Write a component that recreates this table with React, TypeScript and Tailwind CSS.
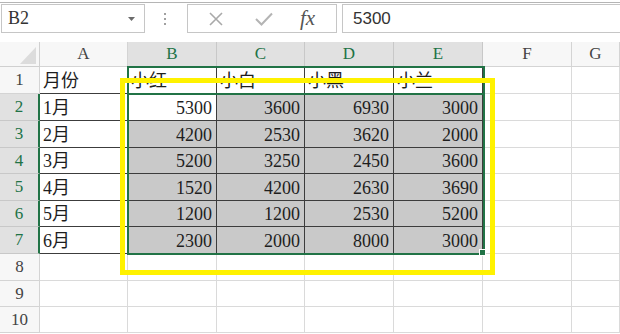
import React from 'react';

const COLS = ['A', 'B', 'C', 'D', 'E', 'F', 'G'];
const ROW_HEIGHTS = [27, 27, 27, 26, 27, 26, 27, 27, 26, 26];

const DATA: (string | number)[][] = [
  ['月份', '小红', '小白', '小黑', '小兰'],
  ['1月', 5300, 3600, 6930, 3000],
  ['2月', 4200, 2530, 3620, 2000],
  ['3月', 5200, 3250, 2450, 3600],
  ['4月', 1520, 4200, 2630, 3690],
  ['5月', 1200, 1200, 2530, 5200],
  ['6月', 2300, 2000, 8000, 3000],
];

const serif = "font-['Liberation_Serif','Noto_Sans_CJK_SC',serif]";

const FormulaBar = (): React.ReactElement => {
  return (
    <div className="h-[40px] border-t border-[#b5b5b5] flex items-start pt-[1px]">
      <div className="ml-[1px] w-[144px] h-[29px] border border-[#c6c6c6] flex items-center justify-between pl-[6px] pr-[9px]">
        <span className={`${serif} text-[18px] text-[#333]`}>B2</span>
        <svg width="7" height="4" viewBox="0 0 7 4">
          <path d="M0 0 H7 L3.5 4 Z" fill="#6b6b6b" />
        </svg>
      </div>
      <div className="w-[42px] h-[29px] flex flex-col items-center justify-center gap-[3px] pr-[2px]">
        <span className="w-[2px] h-[2px] bg-[#a0a0a0]" />
        <span className="w-[2px] h-[2px] bg-[#a0a0a0]" />
        <span className="w-[2px] h-[2px] bg-[#a0a0a0]" />
      </div>
      <div className="w-[150px] h-[29px] border border-[#c6c6c6] flex items-center">
        <svg className="ml-[21px]" width="14" height="14" viewBox="0 0 14 14">
          <path d="M1 1 L13 13 M13 1 L1 13" stroke="#a9a9a9" strokeWidth="1.6" />
        </svg>
        <svg className="ml-[32px]" width="18" height="14" viewBox="0 0 18 14">
          <path d="M1 7 L6.5 12.5 L17 1.5" stroke="#b4b4b4" strokeWidth="2" fill="none" />
        </svg>
        <span className="ml-[27px] font-['Liberation_Serif',serif] italic text-[21px] text-[#555] leading-none">
          fx
        </span>
      </div>
      <div className="ml-[5px] flex-1 h-[29px] border border-r-0 border-[#c6c6c6] flex items-center pl-[10px]">
        <span className="font-['Liberation_Sans',sans-serif] text-[17px] text-[#333]">5300</span>
      </div>
    </div>
  );
};

const Sheet = (): React.ReactElement => {
  return (
    <div className="relative">
      <div className="grid grid-cols-[40px_88px_89px_88px_89px_89px_89px_1fr]">
        {/* corner */}
        <div className="h-[25px] bg-[#f7f7f7] border-r border-b border-[#d0d0d0] flex items-end justify-end pr-[3px] pb-[2px]">
          <svg width="16" height="17" viewBox="0 0 16 17">
            <path d="M16 0 V17 H0 Z" fill="#dcdcdc" />
          </svg>
        </div>
        {COLS.map((c, i) => {
          const sel = i >= 1 && i <= 4;
          return (
            <div
              key={c}
              className={`h-[25px] flex items-center justify-center border-r border-b ${serif} text-[17px] ${
                sel
                  ? 'bg-[#e1e1e1] text-[#217346] border-r-[#c8c8c8] border-b-[#217346]'
                  : 'bg-[#f7f7f7] text-[#444] border-[#d4d4d4]'
              }`}
            >
              {c}
            </div>
          );
        })}

        {ROW_HEIGHTS.map((h, r) => {
          const rowSel = r >= 1 && r <= 6;
          const cells = DATA[r];
          return (
            <React.Fragment key={r}>
              <div
                style={{ height: h }}
                className={`flex items-center justify-center border-b ${serif} text-[17px] ${
                  rowSel
                    ? 'bg-[#e1e1e1] text-[#217346] border-r-2 border-r-[#217346] border-b-[#c8c8c8]'
                    : 'bg-[#f7f7f7] text-[#444] border-r border-[#d4d4d4]'
                }`}
              >
                {r + 1}
              </div>
              {COLS.map((_, c) => {
                const inTable = cells !== undefined && c <= 4;
                const value = inTable ? cells[c] : '';
                const isNum = typeof value === 'number';
                const gray = r >= 1 && r <= 6 && c >= 1 && c <= 4 && !(r === 1 && c === 1);
                return (
                  <div
                    key={c}
                    style={{ height: h }}
                    className={`flex items-center pt-[2px] ${serif} text-[18px] text-[#1e1e1e] border-r border-b ${
                      inTable ? 'border-[#3c3c3c]' : 'border-[#dadada]'
                    } ${gray ? 'bg-[#c9c9c9]' : 'bg-white'} ${
                      isNum ? 'justify-end pr-[4px]' : 'justify-start pl-[3px]'
                    }`}
                  >
                    {value}
                  </div>
                );
              })}
            </React.Fragment>
          );
        })}
      </div>

      {/* selection outline */}
      <div className="absolute left-[127px] top-[24px] w-[358px] h-[189px] border-2 border-[#217346]" />
      <div className="absolute left-[127px] top-[51px] w-[358px] h-[2px] bg-[#217346]" />
      <div className="absolute left-[479px] top-[207px] w-[7px] h-[7px] bg-[#217346] border border-white" />

      {/* highlight frame */}
      <div className="absolute left-[120px] top-[36px] w-[375px] h-[197px] border-[5px] border-[#fff200]" />
    </div>
  );
};

const App = (): React.ReactElement => {
  return (
    <div className="w-[620px] h-[334px] overflow-hidden bg-white pt-[2px]">
      <FormulaBar />
      <Sheet />
    </div>
  );
};

export default App;
